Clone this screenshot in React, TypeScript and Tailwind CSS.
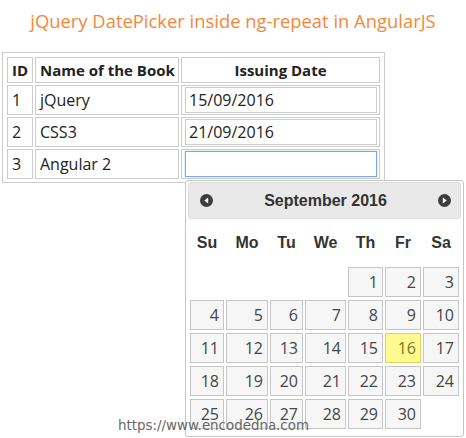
import React from "react";

const body = { fontFamily: '"Open Sans", "Noto Sans", sans-serif' };
const arial = { fontFamily: '"Liberation Sans", Arial, sans-serif' };

function Arrow({ dir }: { dir: "l" | "r" }) {
  return (
    <svg width="13" height="13" viewBox="0 0 13 13">
      <circle cx="6.5" cy="6.5" r="6.5" fill="#3d3d3d" />
      {dir === "l" ? (
        <path d="M8.2 3.6 L4.3 6.5 L8.2 9.4 Z" fill="#fff" />
      ) : (
        <path d="M4.8 3.6 L8.7 6.5 L4.8 9.4 Z" fill="#fff" />
      )}
    </svg>
  );
}

const weeks: (number | null)[][] = [
  [null, null, null, null, 1, 2, 3],
  [4, 5, 6, 7, 8, 9, 10],
  [11, 12, 13, 14, 15, 16, 17],
  [18, 19, 20, 21, 22, 23, 24],
  [25, 26, 27, 28, 29, 30, null],
];

const dayNames = ["Su", "Mo", "Tu", "We", "Th", "Fr", "Sa"];

export default function App() {
  const rows = [
    { id: "1", name: "jQuery", date: "15/09/2016" },
    { id: "2", name: "CSS3", date: "21/09/2016" },
    { id: "3", name: "Angular 2", date: "" },
  ];
  return (
    <div className="relative w-[466px] h-[438px] bg-white overflow-hidden">
      <div
        className="h-[52px] pt-[9px] text-center text-[18.4px] leading-[24px] text-[#f3883b]"
        style={body}
      >
        jQuery DatePicker inside ng-repeat in AngularJS
      </div>
      <div className="ml-[2px] inline-block border border-[#cccccc] px-[2px] pt-[2px] pb-[1px]">
        <table
          className="table-fixed w-[377px] border-separate border-spacing-[2px] text-[16px] text-[#222] whitespace-nowrap"
          style={body}
        >
          <colgroup>
            <col className="w-[26px]" />
            <col className="w-[144px]" />
            <col className="w-[199px]" />
          </colgroup>
          <thead>
            <tr>
              <th className="h-[26px] border border-[#cccccc] px-[4px] text-left font-bold text-[15px] leading-[20px]">
                ID
              </th>
              <th className="border border-[#cccccc] px-[4px] text-left font-bold text-[15px] leading-[20px]">
                Name of the Book
              </th>
              <th className="border border-[#cccccc] px-[4px] text-center font-bold text-[15px] leading-[20px]">
                Issuing Date
              </th>
            </tr>
          </thead>
          <tbody>
            {rows.map((r, i) => (
              <tr key={r.id}>
                <td className="h-[30px] border border-[#cccccc] px-[4px] leading-[20px]">
                  {r.id}
                </td>
                <td className="border border-[#cccccc] px-[4px] leading-[20px]">
                  {r.name}
                </td>
                <td className="border border-[#cccccc] pl-[3px] pr-[2px] py-[1px]">
                  <div
                    className={
                      i === 2
                        ? "h-[26px] w-[192px] border border-[#7ea9dd] shadow-[0_0_2px_#a9c7ec] px-[3px] leading-[24px]"
                        : "h-[26px] w-[192px] border border-[#cccccc] px-[3px] leading-[24px]"
                    }
                  >
                    {r.date}
                  </div>
                </td>
              </tr>
            ))}
          </tbody>
        </table>
      </div>

      {/* datepicker overlay */}
      <div className="absolute left-[185px] top-[180px] w-[279px] h-[257px] border border-[#c5c5c5] rounded-[3px] bg-white p-[2px] pt-[1px]">
        <div
          className="h-[37px] flex items-center justify-between pl-[11px] pr-[9px] bg-[#e9e9e9] border border-[#dddddd] rounded-[3px] text-[#333] font-bold text-[16px]"
          style={arial}
        >
          <Arrow dir="l" />
          <span>September 2016</span>
          <Arrow dir="r" />
        </div>
        <div className="ml-[2px]">
          <div
            className="grid grid-cols-[34px_42px_33px_41px_35px_36px_36px] gap-x-[2px] h-[46px] items-center text-center font-bold text-[16px] text-[#333] pt-[2px]"
            style={arial}
          >
            {dayNames.map((d) => (
              <div key={d}>{d}</div>
            ))}
          </div>
          <div
            className="mt-[2px] grid grid-cols-[34px_42px_33px_41px_35px_36px_36px] gap-x-[2px] gap-y-[3px] text-[16px]"
            style={body}
          >
            {weeks.flat().map((d, i) =>
              d === null ? (
                <div key={i} className="h-[30px]" />
              ) : d === 16 ? (
                <div
                  key={i}
                  className="h-[30px] border border-[#dad55e] bg-[#fffa90] text-[#777620] text-right pr-[4px] leading-[28px]"
                >
                  {d}
                </div>
              ) : (
                <div
                  key={i}
                  className="h-[30px] border border-[#c5c5c5] bg-[#f6f6f6] text-[#454545] text-right pr-[4px] leading-[28px]"
                >
                  {d}
                </div>
              )
            )}
          </div>
        </div>
      </div>

      <div
        className="absolute left-[118px] top-[417px] text-[13.4px] leading-[18px] text-[#666]"
        style={{ fontFamily: '"DejaVu Sans", Verdana, sans-serif' }}
      >
        https://www.encodedna.com
      </div>
    </div>
  );
}
